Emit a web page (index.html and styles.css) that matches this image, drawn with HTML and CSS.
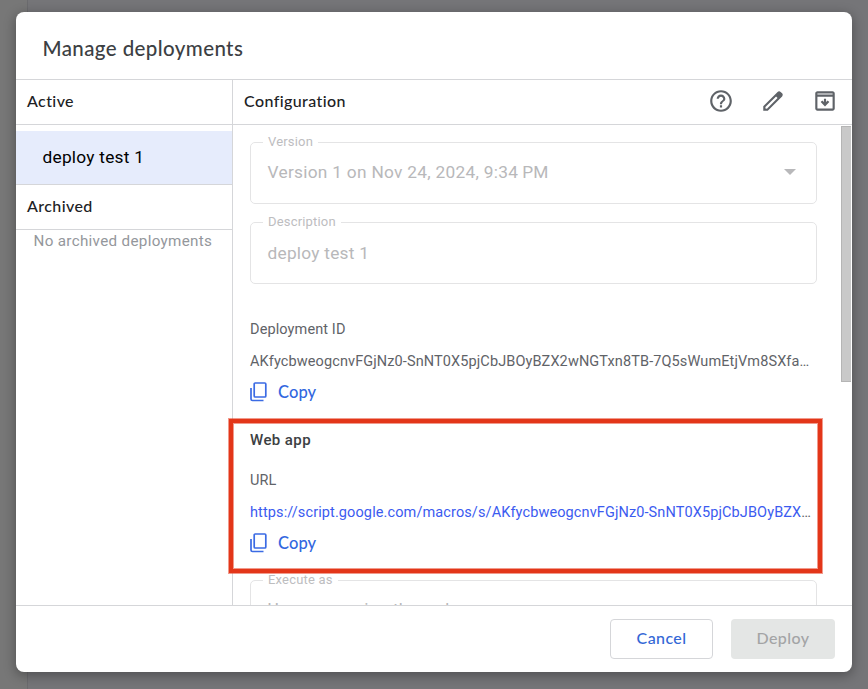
FILE: index.html
```html
<!DOCTYPE html>
<html lang="en">
<head>
<meta charset="utf-8">
<title>Manage deployments</title>
<link rel="stylesheet" href="styles.css">
</head>
<body>
<div class="dialog">
  <header class="title"><h1>Manage deployments</h1></header>
  <main class="columns">
    <nav class="side">
      <h2 class="bar">Active</h2>
      <div class="item"><span>deploy test 1</span></div>
      <h2 class="bar archived">Archived</h2>
      <p class="empty">No archived deployments</p>
    </nav>
    <section class="config">
      <div class="bar config-bar">
        <h2>Configuration</h2>
        <div class="tools">
          <svg width="26" height="26" viewBox="0 0 24 24"><path d="M11 18h2v-2h-2v2zm1-16C6.480 2 2 6.480 2 12s4.480 10 10 10 10-4.480 10-10S17.520 2 12 2zm0 18c-4.410 0-8-3.590-8-8s3.590-8 8-8 8 3.590 8 8-3.590 8-8 8zm0-14c-2.210 0-4 1.790-4 4h2c0-1.100.9-2 2-2s2 .9 2 2c0 2-3 1.750-3 5h2c0-2.250 3-2.500 3-5 0-2.210-1.790-4-4-4z"/></svg>
          <svg width="26" height="26" viewBox="0 0 24 24"><path d="M20.410 4.940l-1.350-1.350c-.78-.78-2.050-.78-2.830 0L3 16.820V21h4.180L20.410 7.770c.79-.78.79-2.050 0-2.830zm-14 14.120L5 19v-1.360l9.820-9.820 1.410 1.410-9.820 9.830z"/></svg>
          <svg width="26" height="26" viewBox="0 0 24 24"><path d="M19 3H5C3.900 3 3 3.900 3 5v14c0 1.100.9 2 2 2h14c1.100 0 2-.9 2-2V5c0-1.100-.9-2-2-2zM5 5h14v1H5V5zm14 14H5V8h14v11zM11 10h2v3l1.500-1.400L16 13l-4 4-4-4 1.500-1.400L11 13z"/></svg>
        </div>
      </div>
      <div class="scroll">
        <div class="content">
          <fieldset class="field"><legend>Version</legend><div class="value select"><span class="version">Version 1 on Nov 24, 2024, 9:34&#8201;PM</span><i class="caret"></i></div></fieldset>
          <fieldset class="field"><legend>Description</legend><div class="value description">deploy test 1</div></fieldset>
          <div class="entry">
            <div class="label">Deployment ID</div>
            <div class="long id">AKfycbweogcnvFGjNz0-SnNT0X5pjCbJBOyBZX2wNGTxn8TB-7Q5sWumEtjVm8SXfa…</div>
            <div class="copy"><svg width="18" height="20" viewBox="0 0 18 20"><path d="M5.200 1h9.600a1 1 0 0 1 1 1v12a1 1 0 0 1-1 1H5.200a1 1 0 0 1-1-1V2a1 1 0 0 1 1-1zM1 6v11a1.500 1.500 0 0 0 1.500 1.500h11"/></svg><span>Copy</span></div>
          </div>
          <div class="webapp">
            <h3>Web app</h3>
            <div class="label">URL</div>
            <div class="long url"><a>https://script.google.com/macros/s/AKfycbweogcnvFGjNz0-SnNT0X5pjCbJBOyBZX</a>…</div>
            <div class="copy"><svg width="18" height="20" viewBox="0 0 18 20"><path d="M5.200 1h9.600a1 1 0 0 1 1 1v12a1 1 0 0 1-1 1H5.200a1 1 0 0 1-1-1V2a1 1 0 0 1 1-1zM1 6v11a1.500 1.500 0 0 0 1.500 1.500h11"/></svg><span>Copy</span></div>
          </div>
          <fieldset class="field execute"><legend>Execute as</legend><div class="value">User accessing the web app</div></fieldset>
        </div>
        <div class="thumb"></div>
      </div>
    </section>
  </main>
  <footer class="actions"><button class="cancel">Cancel</button><button class="deploy" disabled>Deploy</button></footer>
</div>
<div class="highlight"></div>
</body>
</html>
```
FILE: styles.css
```css
* { box-sizing: border-box; }
body { margin: 0; width: 868px; height: 689px; padding: 12px 16px; overflow: hidden; position: relative; background: linear-gradient(90deg, #777 27px, #6b6b6e 27px, #6b6b6e 28px, #757578 28px); font-family: Roboto, sans-serif; }
h1, h2, h3, p { margin: 0; font-weight: 500; }
.dialog { width: 836px; height: 660px; background: #fff; border-radius: 8px; overflow: hidden; display: flex; flex-direction: column; box-shadow: 0 3px 12px 1px rgba(0,0,0,.3); }
.title { height: 68px; border-bottom: 1px solid #d5d6d9; padding: 5px 26.500px 0; display: flex; align-items: center; }
h1 { font: 500 20.500px "Lato Medium", Lato, sans-serif; letter-spacing: .4px; color: #3c4043; }
.columns { flex: 1; min-height: 0; display: grid; grid-template-columns: 217px 1fr; }
.side { border-right: 1px solid #d5d6d9; }
.bar { height: 45px; display: flex; align-items: center; padding: 0 0 3px 11px; border-bottom: 1px solid #d5d6d9; color: #202124; font: 500 16px Lato, sans-serif; letter-spacing: .4px; }
.item { height: 60px; padding-top: 6px; border-bottom: 1px solid #d5d6d9; color: #000; font-size: 17.300px; letter-spacing: .25px; }
.item span { display: flex; align-items: center; height: 53px; background: #e6ecfc; padding: 0 0 2px 26.500px; }
.empty { padding: 1px 0 0 17.500px; line-height: 20px; font-size: 15.200px; font-weight: 400; letter-spacing: .32px; color: #94979c; }
.config { min-width: 0; min-height: 0; display: flex; flex-direction: column; }
.config-bar { flex: none; justify-content: space-between; padding-right: 14px; }
.config-bar h2 { font: inherit; }
.tools { display: flex; gap: 26px; }
.tools svg { fill: #5f6368; display: block; margin-top: 1px; }
.scroll { flex: 1; min-height: 0; overflow: hidden; display: flex; justify-content: space-between; padding-right: 1px; }
.content { width: 567px; margin-left: 17px; padding-top: 10px; }
.field { height: 69px; width: 567px; margin: 0 0 11px; padding: 0 17px 0 12px; border: 1px solid #e4e4e5; border-radius: 5px; color: #b8b8ba; min-width: 0; }
.field legend { height: 15px; line-height: 13px; padding: 0 5px; font-size: 13px; letter-spacing: .18px; color: #bdbdbf; }
.value { height: 43px; padding-left: 4.500px; display: flex; align-items: center; font-size: 17.300px; letter-spacing: .25px; white-space: nowrap; }
.description { height: 46px; }
.execute .value { height: 42px; }
.select { justify-content: space-between; }
.version { letter-spacing: .29px; }
.caret { border: 6px solid transparent; border-top-color: #b8b8ba; border-bottom: 0; margin: 1px 3px 0 0; }
.entry { height: 135px; padding-top: 25px; }
.label, .long { color: #5f6368; font-size: 14.500px; line-height: 20px; letter-spacing: .11px; }
.long { margin-top: 12px; white-space: nowrap; }
.long a { color: #3b5bf0; }
.copy { height: 22px; margin-top: 9px; display: flex; align-items: center; gap: 10px; color: #3367e0; font: 500 16.500px Lato, sans-serif; letter-spacing: .1px; }
.copy svg { fill: none; stroke: #3b6be4; stroke-width: 1.700; }
.webapp { height: 143px; }
h3 { height: 20px; line-height: 20px; font-size: 15px; letter-spacing: .42px; color: #3c4043; margin-bottom: 21px; }
.thumb { width: 10px; height: 256px; margin: 1px 0 0; background: #c9c9c9; border: 1px solid #b5b5b5; border-right: 0; }
.actions { height: 67px; border-top: 1px solid #d5d6d9; padding: 13px 17px 0; display: flex; justify-content: flex-end; gap: 18px; }
button { height: 40px; padding-bottom: 4px; border-radius: 4px; font: 500 16px Lato, sans-serif; letter-spacing: .4px; }
.cancel { width: 103px; color: #3367d6; background: #fff; border: 1px solid #d5d6d9; }
.deploy { width: 104px; color: #a3a4a5; background: #e4e6e5; border: 0; }
.highlight { position: absolute; left: 229px; top: 419px; width: 593px; height: 154px; border: 4px solid #e33619; box-shadow: 0 0 0 1px rgba(227,54,25,.5), inset 0 0 0 1px rgba(227,54,25,.5); }
```
